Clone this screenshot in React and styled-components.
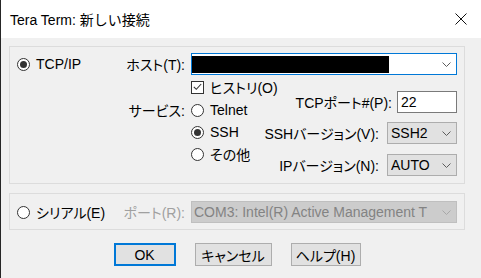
import styled, { createGlobalStyle } from 'styled-components'

const Global = createGlobalStyle`
  html, body {
    margin: 0;
    padding: 0;
    background: #f0f0f0;
  }
  body {
    font-family: "Liberation Sans", "Noto Sans CJK JP", sans-serif;
    font-size: 14px;
    font-feature-settings: "palt" 1;
    color: #000;
  }
`

const Window = styled.div`
  width: 481px;
  height: 278px;
  box-sizing: border-box;
  border-left: 1px solid #262626;
  background: #f0f0f0;
  overflow: hidden;
  display: flex;
  flex-direction: column;
`

const TitleBar = styled.div`
  height: 38px;
  flex: none;
  background: #fff;
  display: flex;
  align-items: center;
  justify-content: space-between;
  padding: 0 14px 0 9px;
  font-size: 14px;
  font-feature-settings: normal;
`

const Body = styled.div`
  padding: 8px 0 0 8px;
  display: flex;
  flex-direction: column;
`

const GroupBox = styled.div`
  box-sizing: border-box;
  width: 456px;
  height: ${p => p.$h}px;
  margin-top: ${p => p.$mt || 0}px;
  border: 1px solid #dcdcdc;
  padding: ${p => p.$pt}px 0 0 7px;
  display: grid;
  grid-template-columns: 100px 74px 266px;
  grid-template-rows: 22px auto;
  align-items: start;
`

const Option = styled.label`
  display: flex;
  align-items: center;
  gap: 6px;
  height: 22px;
  white-space: nowrap;
  margin-top: ${p => p.$mt || 0}px;
`

const RadioDot = styled.span`
  box-sizing: border-box;
  width: 13px;
  height: 13px;
  flex: none;
  border-radius: 50%;
  border: 1px solid #333;
  background: #fff;
  display: flex;
  align-items: center;
  justify-content: center;
  &::after {
    content: '';
    width: 7px;
    height: 7px;
    border-radius: 50%;
    background: ${p => (p.$on ? '#333' : 'transparent')};
  }
`

const CheckBox = styled.span`
  box-sizing: border-box;
  width: 13px;
  height: 13px;
  flex: none;
  border: 1px solid #333;
  background: #fff;
  display: flex;
  align-items: center;
  justify-content: center;
`

const Label = styled.div`
  height: 22px;
  display: flex;
  align-items: center;
  justify-content: flex-end;
  padding-right: 6px;
  white-space: nowrap;
  color: ${p => (p.$disabled ? '#a0a0a0' : '#000')};
  margin-top: ${p => p.$mt || 0}px;
`

const Combo = styled.div`
  box-sizing: border-box;
  width: ${p => p.$w}px;
  height: 22px;
  display: flex;
  align-items: center;
  padding-left: ${p => p.$pl}px;
  border: 1px solid ${p => p.$border};
  background: ${p => p.$bg};
  color: ${p => p.$color || '#000'};
  white-space: nowrap;
  overflow: hidden;
`

const ComboText = styled.span`
  flex: 1;
  overflow: hidden;
`

const Chevron = styled.svg`
  flex: none;
  margin: 0 5px 0 4px;
`

const Redacted = styled.div`
  width: 197px;
  height: 17px;
  background: #000;
`

const Field = styled.div`
  box-sizing: border-box;
  width: 60px;
  height: 22px;
  border: 1px solid #7a7a7a;
  background: #fff;
  display: flex;
  align-items: center;
  padding-left: 3px;
`

const Lower = styled.div`
  display: flex;
`

const OptionsCol = styled.div`
  width: 70px;
  display: flex;
  flex-direction: column;
  padding-top: 1px;
`

const SettingsCol = styled.div`
  flex: 1;
  display: flex;
  flex-direction: column;
  align-items: flex-end;
  padding-top: 16px;
  gap: 9px;
`

const SettingRow = styled.div`
  display: flex;
  align-items: center;
  gap: ${p => p.$gap}px;
  white-space: nowrap;
  margin-top: ${p => p.$mt || 0}px;
`

const ButtonRow = styled.div`
  width: 456px;
  margin-top: 13px;
  display: flex;
  justify-content: center;
  gap: 19px;
`

const Button = styled.div`
  box-sizing: border-box;
  width: ${p => p.$w}px;
  height: 23px;
  background: #e1e1e1;
  border: ${p => (p.$default ? '2px solid #0078d7' : '1px solid #adadad')};
  display: flex;
  align-items: center;
  justify-content: center;
  white-space: nowrap;
`

const Arrow = ({ color = '#5c5c5c' }) => (
  <Chevron width="9" height="5" viewBox="0 0 9 5">
    <polyline points="0.5,0.5 4.5,4.5 8.5,0.5" fill="none" stroke={color} strokeWidth="1" />
  </Chevron>
)

const Radio = ({ on, children, mt }) => (
  <Option $mt={mt}>
    <RadioDot $on={on} />
    {children}
  </Option>
)

export default function App() {
  return (
    <>
      <Global />
      <Window>
        <TitleBar>
          <span>Tera Term: 新しい接続</span>
          <svg width="12" height="12" viewBox="0 0 12 12">
            <path d="M0.5 0.5 L11.5 11.5 M11.5 0.5 L0.5 11.5" stroke="#111" strokeWidth="1" />
          </svg>
        </TitleBar>
        <Body>
          <GroupBox $h={138} $pt={6}>
            <Radio on>TCP/IP</Radio>
            <Label>ホスト(T):</Label>
            <Combo $w={266} $pl={0} $border="#0078d7" $bg="#fff">
              <ComboText>
                <Redacted />
              </ComboText>
              <Arrow />
            </Combo>
            <div />
            <Label $mt={24}>サービス:</Label>
            <Lower>
              <OptionsCol>
                <Option>
                  <CheckBox>
                    <svg width="9" height="8" viewBox="0 0 9 8">
                      <polyline points="0.8,3.8 3.3,6.3 8.2,1" fill="none" stroke="#333" strokeWidth="1.1" />
                    </svg>
                  </CheckBox>
                  ヒストリ(O)
                </Option>
                <Radio mt={1}>Telnet</Radio>
                <Radio on>SSH</Radio>
                <Radio>その他</Radio>
              </OptionsCol>
              <SettingsCol>
                <SettingRow $gap={5}>
                  TCPポート#(P):
                  <Field>22</Field>
                </SettingRow>
                <SettingRow $gap={8}>
                  SSHバージョン(V):
                  <Combo $w={70} $pl={3} $border="#adadad" $bg="#e1e1e1">
                    <ComboText>SSH2</ComboText>
                    <Arrow />
                  </Combo>
                </SettingRow>
                <SettingRow $gap={8} $mt={1}>
                  IPバージョン(N):
                  <Combo $w={70} $pl={3} $border="#adadad" $bg="#e1e1e1">
                    <ComboText>AUTO</ComboText>
                    <Arrow />
                  </Combo>
                </SettingRow>
              </SettingsCol>
            </Lower>
          </GroupBox>

          <GroupBox $h={37} $pt={7} $mt={9}>
            <Radio>シリアル(E)</Radio>
            <Label $disabled>ポート(R):</Label>
            <Combo $w={266} $pl={2} $border="#bfbfbf" $bg="#cccccc" $color="#838383">
              <ComboText>COM3: Intel(R) Active Management T</ComboText>
              <Arrow color="#a8a8a8" />
            </Combo>
          </GroupBox>

          <ButtonRow>
            <Button $w={62} $default>OK</Button>
            <Button $w={77}>キャンセル</Button>
            <Button $w={70}>ヘルプ(H)</Button>
          </ButtonRow>
        </Body>
      </Window>
    </>
  )
}
